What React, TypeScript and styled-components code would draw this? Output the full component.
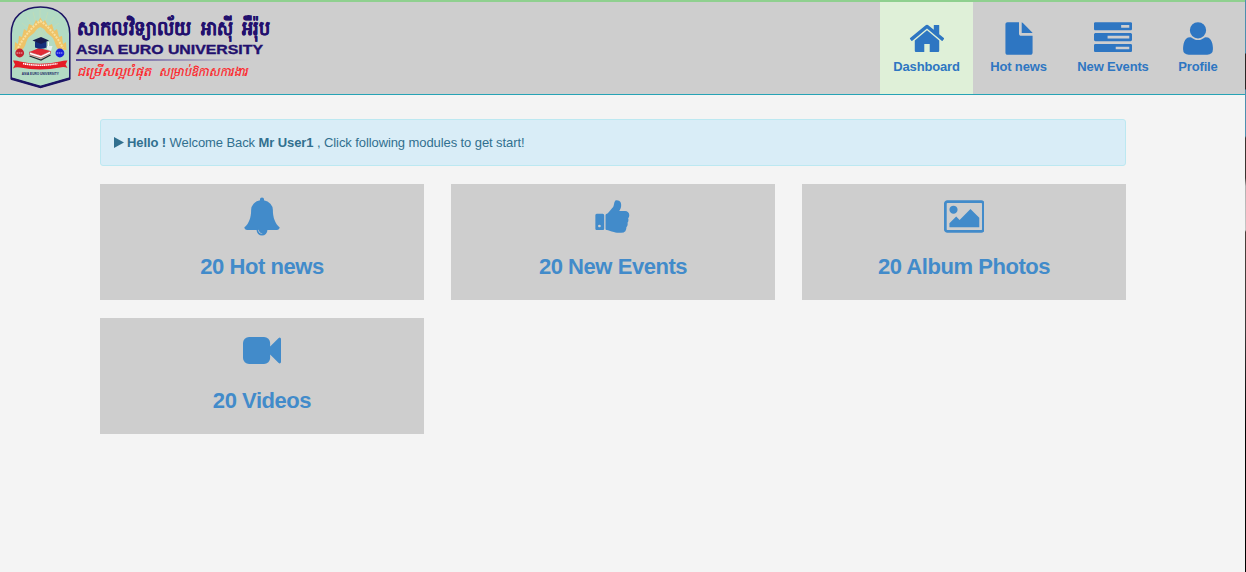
import React from 'react';
import styled, { createGlobalStyle } from 'styled-components';

const Global = createGlobalStyle`
  * { box-sizing: border-box; }
  body {
    margin: 0;
    background: #f4f4f4;
    font-family: "Liberation Sans", Arial, sans-serif;
    font-size: 13px;
    line-height: 18px;
    color: #333;
  }
`;

const Page = styled.div`
  min-height: 572px;
  border-right: 1px solid;
  border-image: linear-gradient(
    #4d8fae 53px, #2a2626 54px, #2a2626 89px, #4d8fae 90px, #4d8fae 136px,
    #3a3330 138px, #3a3330 178px, #b0b0b0 186px, #c4c4c4 230px,
    #4a403b 232px, #3a3838 330px, #141414 390px, #000 430px
  ) 0 1 0 0;
`;

const Header = styled.header`
  display: flex;
  justify-content: space-between;
  height: 95px;
  border-top: 2px solid #8fd08f;
  border-bottom: 1px solid #26a3b5;
  background: #cecece;
`;

const Brand = styled.a`
  display: flex;
  gap: 5px;
  padding: 4px 0 0 10px;
`;

const Crest = styled.svg`
  width: 61px;
  height: 84px;
`;

const BrandText = styled.div`
  display: flex;
  flex-direction: column;
  padding-top: 5px;
`;

const Line = styled.svg`
  display: block;
  overflow: visible;
`;

const NavBar = styled.nav`
  display: flex;
  padding-right: 11px;
`;

const NavItem = styled.a<{ $width: number; $active?: boolean }>`
  display: flex;
  flex-direction: column;
  align-items: center;
  width: ${p => p.$width}px;
  padding-top: 17px;
  background: ${p => (p.$active ? '#dff0d8' : 'transparent')};
  color: #2e76c2;
  font-weight: bold;
  letter-spacing: -0.17px;
  white-space: nowrap;
`;

const Icon = styled.svg`
  display: block;
  height: 39px;
  fill: currentColor;
`;

const Main = styled.main`
  width: 1026px;
  margin: 24px 0 0 100px;
`;

const Alert = styled.div`
  display: flex;
  align-items: center;
  height: 47px;
  padding: 0 13px;
  border: 1px solid #bce8f1;
  border-radius: 3px;
  background: #d9edf7;
  color: #31708f;
  letter-spacing: -0.09px;
`;

const Play = styled.svg`
  width: 10px;
  height: 11px;
  margin-right: 3px;
  fill: currentColor;
`;

const Grid = styled.div`
  display: grid;
  grid-template-columns: repeat(3, 324px);
  gap: 18px 27px;
  margin-top: 18px;
`;

const Card = styled.a`
  display: flex;
  flex-direction: column;
  align-items: center;
  height: 116px;
  padding-top: 13px;
  background: #cecece;
  color: #428bca;
`;

const CardTitle = styled.h3`
  margin: 18px 0 0;
  font-size: 22px;
  line-height: 26px;
  font-weight: bold;
  letter-spacing: -0.45px;
`;

type Glyph = { d: string; x?: number; w?: number };

const glyphs: Record<string, Glyph> = {
  home: { d: 'M1472 992v480q0 26-19 45t-45 19h-384v-384h-256v384h-384q-26 0-45-19t-19-45v-480q0-1 .5-3t.5-3l575-474 575 474q1 2 1 6zm223-69l-62 74q-8 9-21 11h-3q-13 0-21-7l-692-577-692 577q-12 8-24 7-13-2-21-11l-62-74q-8-10-7-23.5t11-21.5l719-599q32-26 76-26t76 26l244 204v-195q0-14 9-23t23-9h192q14 0 23 9t9 23v408l219 182q10 8 11 21.5t-7 23.5z' },
  file: { d: 'M896 128H352q-40 0-68 28t-28 68v1344q0 40 28 68t68 28h1088q40 0 68-28t28-68V768H992q-40 0-68-28t-28-68zM1024 128v512h512q-10-30-36-56l-408-408q-26-32-68-48z' },
  tasks: { d: 'M1024 1408h640v-128h-640v128zm-384-512h1024v-128h-1024v128zm640-512h384v-128h-384v128zm512 832v256q0 26-19 45t-45 19h-1664q-26 0-45-19t-19-45v-256q0-26 19-45t45-19h1664q26 0 45 19t19 45zm0-512v256q0 26-19 45t-45 19h-1664q-26 0-45-19t-19-45v-256q0-26 19-45t45-19h1664q26 0 45 19t19 45zm0-512v256q0 26-19 45t-45 19h-1664q-26 0-45-19t-19-45v-256q0-26 19-45t45-19h1664q26 0 45 19t19 45z' },
  user: { d: 'M1600 1405q0 120-73 189.500t-194 69.500h-874q-121 0-194-69.500t-73-189.500q0-53 3.500-103.500t14-109 26.500-108.500 43-97.500 62-81 85.500-53.500 111.500-20q9 0 42 21.500t74.500 48 108 48 133.500 21.500 133.500-21.500 108-48 74.500-48 42-21.500q61 0 111.500 20t85.500 53.500 62 81 43 97.500 26.500 108.500 14 109 3.500 103.500zm-320-893q0 159-112.500 271.500t-271.500 112.500-271.500-112.500-112.500-271.500 112.500-271.500 271.500-112.500 271.500 112.500 112.500 271.500z' },
  bell: { d: 'M912 1696q0-16-16-16-59 0-101.500-42.500t-42.500-101.500q0-16-16-16t-16 16q0 73 51.500 124.500t124.500 51.500q16 0 16-16zm816-288q0 52-38 90t-90 38h-448q0 106-75 181t-181 75-181-75-75-181h-448q-52 0-90-38t-38-90q50-42 91-88t85-119.500 74.500-158.500 50-206 19.500-260q0-152 117-282.500t307-158.500q-8-19-8-39 0-40 28-68t68-28 68 28 28 68q0 20-8 39 190 28 307 158.500t117 282.500q0 139 19.500 260t50 206 74.500 158.500 85 119.500 91 88z' },
  thumb: { d: 'M320 1344q0-26-19-45t-45-19q-27 0-45.500 19t-18.500 45q0 27 18.500 45.500t45.500 18.500q26 0 45-18.500t19-45.500zm160-512v640q0 26-19 45t-45 19h-288q-26 0-45-19t-19-45v-640q0-26 19-45t45-19h288q26 0 45 19t19 45zm1184 0q0 86-55 149 15 44 15 76 3 76-43 137 17 56 0 117-15 57-54 94 9 112-49 181-64 76-197 78h-129q-66 0-144-15.500t-121.500-29-120.500-39.500q-123-43-158-44-26-1-45-19.500t-19-44.500v-641q0-25 18-43.500t43-20.500q24-2 76-59t101-121q68-87 101-120 18-18 31-48t17.500-48.500 13.500-60.500q7-39 12.500-61t19.500-52 34-50q19-19 45-19 46 0 82.500 10.500t60 26 40 40.500 24 45 12 50 5 45 .5 39q0 38-9.500 76t-19 60-27.500 56q-3 6-10 18t-11 22-8 24h277q78 0 135 57t57 135z' },
  image: { x: -64, w: 1920, d: 'M576 576q0 80-56 136t-136 56-136-56-56-136 56-136 136-56 136 56 56 136zm1024 384v448h-1408v-192l320-320 160 160 512-512zm96-704h-1600q-13 0-22.500 9.500t-9.500 22.500v1216q0 13 9.500 22.500t22.500 9.500h1600q13 0 22.500-9.500t9.500-22.500v-1216q0-13-9.500-22.500t-22.500-9.500zm160 32v1216q0 66-47 113t-113 47h-1600q-66 0-113-47t-47-113v-1216q0-66 47-113t113-47h1600q66 0 113 47t47 113z' },
  video: { d: 'M1792 352v1088q0 42-39 59-13 5-25 5-27 0-45-19l-403-403v166q0 119-84.500 203.500t-203.500 84.500h-704q-119 0-203.500-84.500t-84.500-203.500v-704q0-119 84.500-203.500t203.500-84.500h704q119 0 203.500 84.500t84.500 203.500v165l403-402q18-19 45-19 12 0 25 5 39 17 39 59z' },
};

const GlyphIcon = ({ name }: { name: string }) => {
  const g = glyphs[name];
  const w = g.w ?? 1792;
  return (
    <Icon width={(38 * w) / 1792} viewBox={`${g.x ?? 0} 0 ${w} 1792`}>
      <path d={g.d} />
    </Icon>
  );
};

const nav = [
  { icon: 'home', label: 'Dashboard', width: 93, active: true },
  { icon: 'file', label: 'Hot news', width: 91 },
  { icon: 'tasks', label: 'New Events', width: 98 },
  { icon: 'user', label: 'Profile', width: 72 },
];

const cards = [
  { icon: 'bell', title: '20 Hot news' },
  { icon: 'thumb', title: '20 New Events' },
  { icon: 'image', title: '20 Album Photos' },
  { icon: 'video', title: '20 Videos' },
];

const UniversityCrest = () => (
  <Crest viewBox="0 0 61 84">
    <path d="M1.200 72.500V28C1.200 11 13 1 30.500 1S59.800 11 59.800 28V72.500L30.500 81Z" fill="#b2dbc4" stroke="#1c1464" strokeWidth="1.500" />
    <path d="M1 72.500L30.500 81L60 72.500" fill="none" stroke="#1c1464" strokeWidth="2.600" />
    <path d="M30 32L12 17M30 32L17 11M30 32L23 6M30 32V4M30 32L38 6M30 32L44 11M30 32L49 17" stroke="#c0ddb8" strokeWidth="1" />
    <path d="M4.500 44L5 36L8 38L9 30L12 31L14 23L17 25L19 18L23 20L26 14L28 16L30.300 11.500L33 16L35 14L38 20L42 18L44 25L47 23L49 31L52 30L53 38L56 36L56.500 44L48 43C45 40 45 34 42 31L37 27L34 23L30.300 21L27 23L24 27L19 31C16 34 16 40 13 43Z" fill="#eec368" />
    <path d="M8 42L12 35L17 28L24 20L30.300 15L37 20L44 28L49 35L53 42" fill="none" stroke="#f8e0a0" strokeWidth="2" strokeDasharray="2 1.200" />
    <path d="M19.500 46L29 42L40.500 45L31 49.500Z" fill="#e32a35" />
    <path d="M19.500 46L31 49.500L40.500 45V47.500L31 52L19.500 48.500Z" fill="#fff" stroke="#c4232e" strokeWidth=".6" />
    <path d="M19.500 50L31 54L40.500 49" fill="none" stroke="#27202c" strokeWidth="1.300" />
    <path d="M25 35.500H36.500V41.500Q31 44 25 41.500Z" fill="#152f7c" />
    <path d="M22.500 34.500L31 31L39 34.500L31 38Z" fill="#171c50" />
    <path d="M38.500 36V41" stroke="#fff" strokeWidth="1" />
    <path d="M37 40H42.500L41 45L37 43Z" fill="#e5f1f4" />
    <circle cx="9.700" cy="47" r="4.400" fill="#c4232e" />
    <circle cx="49.900" cy="47" r="4.400" fill="#1721db" />
    <path d="M6.500 47H13M46.700 47H53.200" stroke="#fff" strokeOpacity=".45" strokeWidth="1.500" strokeDasharray="1.500 .6" />
    <path d="M3 54.500Q6 54 10 55.500Q30 60 50 55.500Q55 54 57.500 54.500L55.500 58.500L57.500 62Q54 60.500 50 61.500Q30 65.500 10 61.500Q6 60.500 3 62.500L5 58.500Z" fill="#e51c26" />
    <path d="M13 57.500Q30 61 47.500 57.500" fill="none" stroke="#fff" strokeWidth="1.600" strokeDasharray="1.400 .5" />
    <text x="30.300" y="69.200" textAnchor="middle" textLength="37" lengthAdjust="spacingAndGlyphs" fontSize="3.600" fontWeight="bold" fill="#1d2767">ASIA EURO UNIVERSITY</text>
  </Crest>
);

const Wordmark = () => (
  <>
    <Line width="200" height="31" fontSize="20" fontWeight="bold" fill="#22106e" stroke="#22106e" strokeWidth=".3">
      <text x="1" y="23.500" textLength="114" lengthAdjust="spacingAndGlyphs">សាកលវិទ្យាល័យ</text>
      <text x="125" y="23.500" textLength="32" lengthAdjust="spacingAndGlyphs">អាស៊ី</text>
      <text x="166" y="23.500" textLength="28" lengthAdjust="spacingAndGlyphs">អឺរ៉ុប</text>
    </Line>
    <Line width="200" height="20">
      <defs>
        <linearGradient id="rule">
          <stop offset="0" stopColor="#55469a" />
          <stop offset="1" stopColor="#cecece" />
        </linearGradient>
      </defs>
      <text x="0" y="12" textLength="187" lengthAdjust="spacingAndGlyphs" fontSize="12.500" fontWeight="bold" fill="#22106e" stroke="#22106e" strokeWidth=".35">ASIA EURO UNIVERSITY</text>
      <rect x="0" y="17" width="175" height="2" fill="url(#rule)" />
    </Line>
    <Line width="200" height="22" fontSize="12.500" fontStyle="italic" fill="#ff1a1f" stroke="#ff1a1f" strokeWidth=".2">
      <text x="1" y="14" textLength="74" lengthAdjust="spacingAndGlyphs">ជម្រើសល្អបំផុត</text>
      <text x="83" y="14" textLength="89" lengthAdjust="spacingAndGlyphs">សម្រាប់ឱកាសការងារ</text>
    </Line>
  </>
);

export default function App() {
  return (
    <Page>
      <Global />
      <Header>
        <Brand>
          <UniversityCrest />
          <BrandText>
            <Wordmark />
          </BrandText>
        </Brand>
        <NavBar>
          {nav.map(n => (
            <NavItem key={n.label} $width={n.width} $active={n.active}>
              <GlyphIcon name={n.icon} />
              {n.label}
            </NavItem>
          ))}
        </NavBar>
      </Header>
      <Main>
        <Alert>
          <Play viewBox="0 0 10 11"><path d="M0 0L10 5.500L0 11Z" /></Play>
          <span><b>Hello !</b> Welcome Back <b>Mr User1</b> , Click following modules to get start!</span>
        </Alert>
        <Grid>
          {cards.map(c => (
            <Card key={c.title}>
              <GlyphIcon name={c.icon} />
              <CardTitle>{c.title}</CardTitle>
            </Card>
          ))}
        </Grid>
      </Main>
    </Page>
  );
}
